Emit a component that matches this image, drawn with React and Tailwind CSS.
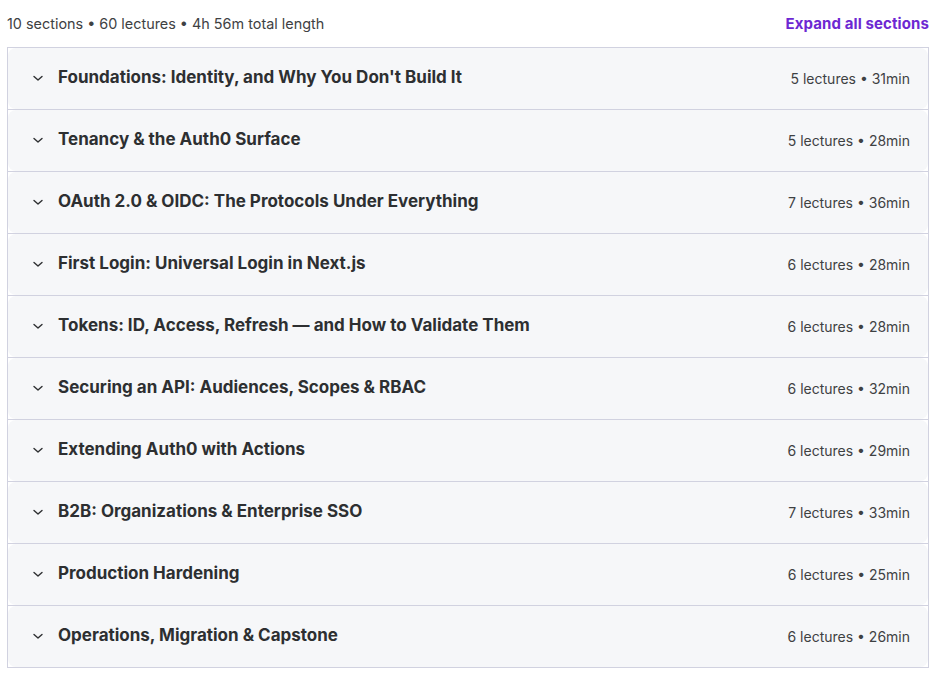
import React from "react";

const sections = [
  { title: "Foundations: Identity, and Why You Don't Build It", lectures: 5, length: "31min" },
  { title: "Tenancy & the Auth0 Surface", lectures: 5, length: "28min" },
  { title: "OAuth 2.0 & OIDC: The Protocols Under Everything", lectures: 7, length: "36min" },
  { title: "First Login: Universal Login in Next.js", lectures: 6, length: "28min" },
  { title: "Tokens: ID, Access, Refresh — and How to Validate Them", lectures: 6, length: "28min" },
  { title: "Securing an API: Audiences, Scopes & RBAC", lectures: 6, length: "32min" },
  { title: "Extending Auth0 with Actions", lectures: 6, length: "29min" },
  { title: "B2B: Organizations & Enterprise SSO", lectures: 7, length: "33min" },
  { title: "Production Hardening", lectures: 6, length: "25min" },
  { title: "Operations, Migration & Capstone", lectures: 6, length: "26min" },
];

const Chevron = () => (
  <svg width="12" height="12" viewBox="0 0 12 12" fill="none" className="shrink-0 mb-[1px]">
    <path d="M2 4.5 L6 8 L10 4.5" stroke="#2d2f31" strokeWidth="1.4" strokeLinecap="round" strokeLinejoin="round" />
  </svg>
);

const App = () => {
  return (
    <div className="bg-white min-h-screen pl-[7px] pr-[6px] font-['Inter',sans-serif] text-[#2d2f31]">
      {/* summary line */}
      <div className="flex items-center justify-between h-[47px] pt-[1px]">
        <span className="text-[14.4px] text-[#3e4143]">10 sections • 60 lectures • 4h 56m total length</span>
        <button className="text-[15px] font-bold text-[#6d28d2] tracking-[0.1px]">Expand all sections</button>
      </div>

      <div className="border border-[#d1d2e0]">
        {sections.map((s, i) => (
          <div
            key={s.title}
            className={i < sections.length - 1 ? "border-b border-[#d1d2e0]" : ""}
          >
            <button className="w-full h-[61px] flex items-center justify-between bg-[#f6f7f9] rounded-lg pl-[24px] pr-[18px] text-left">
              <div className="flex items-center gap-[14px]">
                <Chevron />
                <span className="text-[17px] font-bold mb-[1px]">{s.title}</span>
              </div>
              <span className="text-[14px] text-[#3e4143]">
                {s.lectures} lectures • {s.length}
              </span>
            </button>
          </div>
        ))}
      </div>
    </div>
  );
};

export default App;
